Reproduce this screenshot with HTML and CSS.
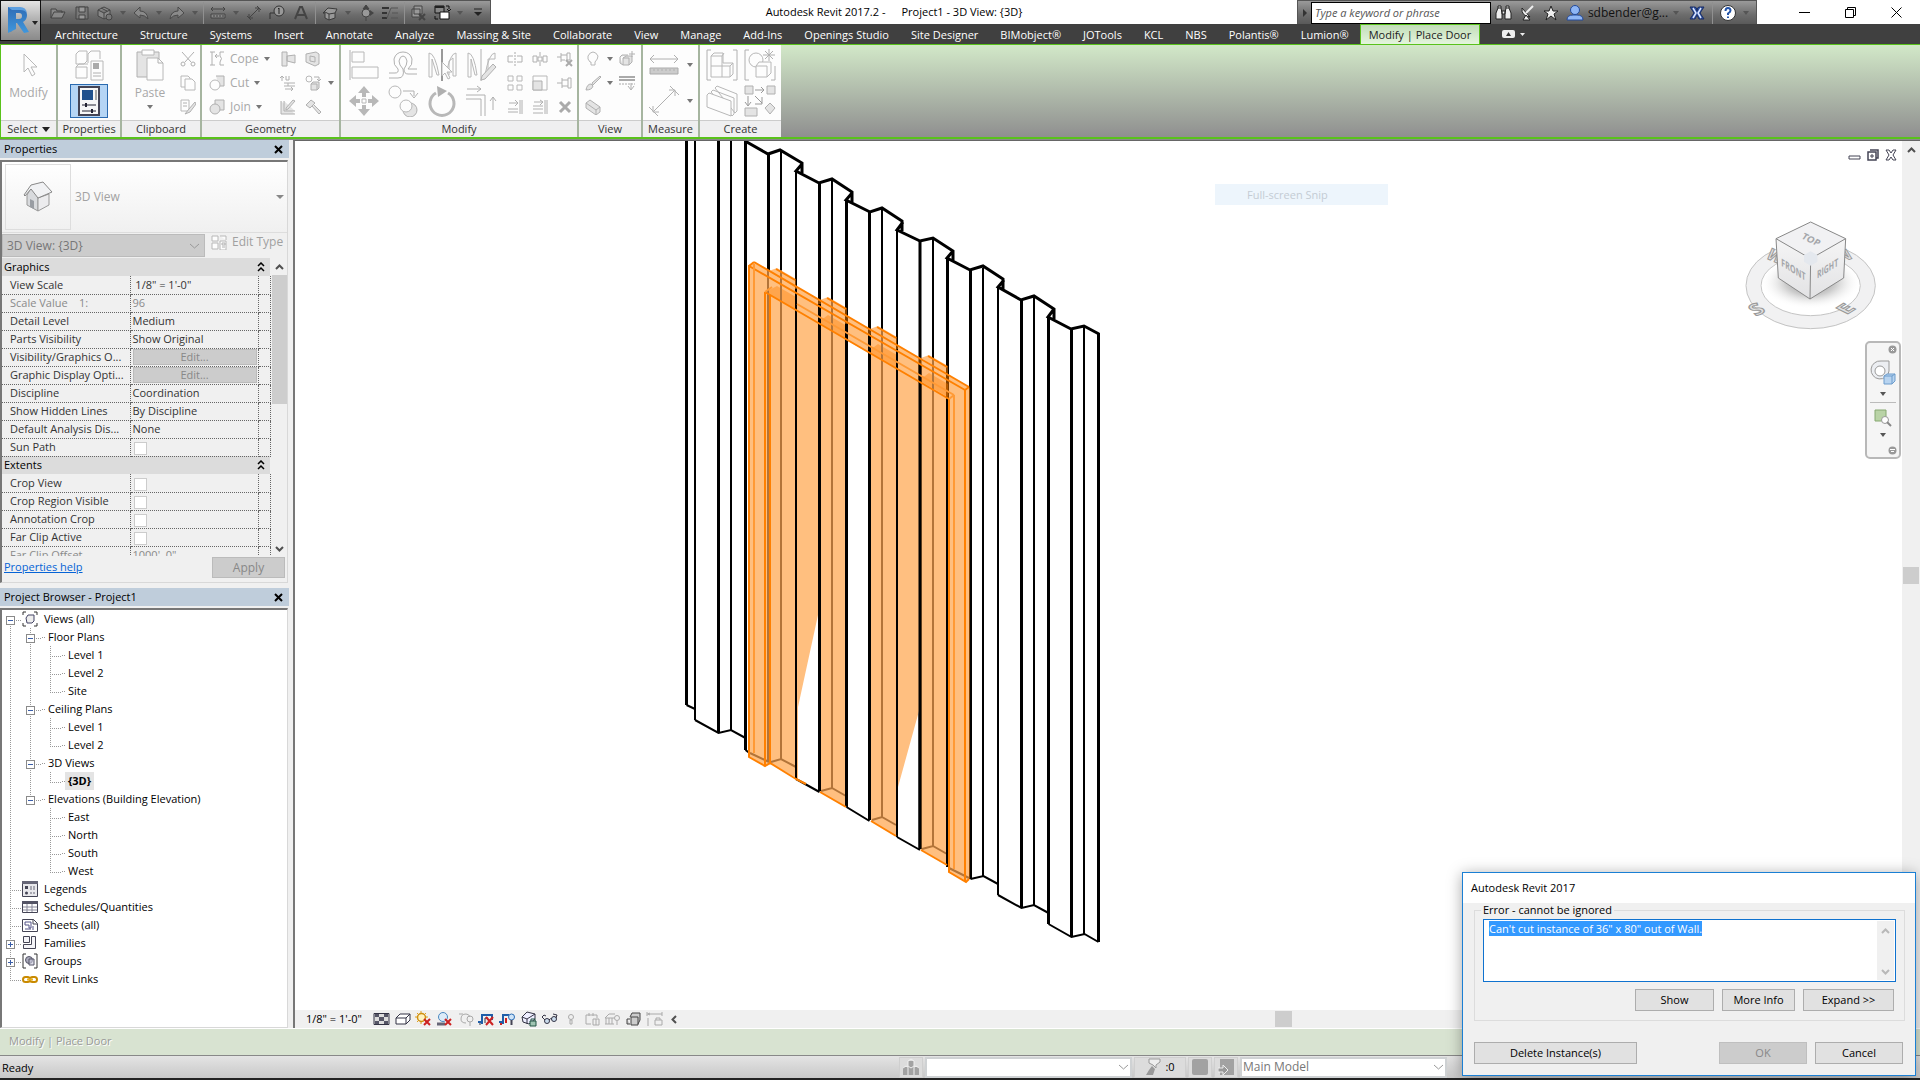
FILE: index.html
```html
<!DOCTYPE html>
<html lang="en">
<head>
<meta charset="utf-8">
<title>Autodesk Revit 2017.2 - Project1 - 3D View: {3D}</title>
<link rel="stylesheet" href="styles.css">
</head>
<body>
<header class="head">
  <button class="app" aria-label="Application menu">
    <svg width="39" height="38" viewBox="0 0 39 38"><defs><linearGradient id="rb" x1="0" y1="0" x2="0" y2="1"><stop offset="0" stop-color="#2f6cb5"/><stop offset="1" stop-color="#3f97dd"/></linearGradient></defs><path d="M7 5l4 2v22l-4 1z" fill="#1d4c86"/><path d="M11 7h8q7 0 7 6 0 5-4 7l6 10-5 1-7-10h-1v6l-8 4V5zM15 11v6h3q3 0 3-3t-3-3z" fill="url(#rb)"/><path d="M7 5h12q6 0 7 6-2-3-7-3h-8z" fill="#5c9fe0"/><path d="M31 19h6l-3 4z" fill="#222"/></svg>
  </button>
  <div class="titlebar">
    <div class="qat">
      <button class="q" aria-label="Open"><svg width="16" height="16" viewBox="0 0 16 16"><path d="M1 13V4h5l1 2h5v2M1 13l3-6h11l-3 6z" fill="#888" stroke="#444"/></svg></button>
      <button class="q" aria-label="Save"><svg width="16" height="16" viewBox="0 0 16 16"><path d="M2 2h12v12H2z" fill="#777" stroke="#444"/><path d="M5 2h6v5H5zM5 10h6v4H5z" fill="#999" stroke="#444"/></svg></button>
      <button class="q" aria-label="Synchronize"><svg width="16" height="16" viewBox="0 0 16 16"><path d="M1 5l6-3 6 3v6l-6 3-6-3zM1 5l6 3 6-3M7 8v6M4 3l6 3" fill="#888" stroke="#444"/><circle cx="12" cy="12" r="3" fill="#777" stroke="#444"/></svg></button>
      <i class="dd"></i>
      <button class="q" aria-label="Undo"><svg width="16" height="16" viewBox="0 0 16 16"><path d="M7 2v4q7 0 8 8-3-4-8-4v3L1 8z" fill="#8a8a8a" stroke="#4a4a4a"/></svg></button>
      <i class="dd"></i>
      <button class="q" aria-label="Redo"><svg width="16" height="16" viewBox="0 0 16 16"><path d="M9 2v4q-7 0-8 8 3-4 8-4v3l6-5z" fill="#8a8a8a" stroke="#4a4a4a"/></svg></button>
      <i class="dd"></i><i class="sep"></i>
      <button class="q" aria-label="Measure"><svg width="16" height="16" viewBox="0 0 16 16"><path d="M1 4h14M3 2L1 4l2 2M13 2l2 2-2 2" fill="none" stroke="#444"/><path d="M1 9h14v4H1z" fill="#888" stroke="#444"/><path d="M4 10v2M7 10v2M10 10v2M13 10v2" stroke="#444"/></svg></button>
      <i class="dd"></i>
      <button class="q" aria-label="Aligned dimension"><svg width="16" height="16" viewBox="0 0 16 16"><path d="M3 13L13 3M3 9v4h4M9 3h4v4M1 11l4 4M11 1l4 4" fill="none" stroke="#444"/></svg></button>
      <button class="q" aria-label="Tag by category"><svg width="16" height="16" viewBox="0 0 16 16"><path d="M1 14V8h4" fill="none" stroke="#333"/><circle cx="10" cy="6" r="5" fill="#999" stroke="#333"/><path d="M10 3v6M9 4l1-1" stroke="#222"/></svg></button>
      <button class="q" aria-label="Text"><svg width="16" height="16" viewBox="0 0 16 16"><path d="M2 14L7 2h2l5 12M4 10h8" fill="none" stroke="#444" stroke-width="2"/></svg></button>
      <i class="sep"></i>
      <button class="q" aria-label="Default 3D view"><svg width="16" height="16" viewBox="0 0 16 16"><path d="M1 8l5-5 9 1-2 4v5l-6 2-4-2V8zM7 15V9l6-1M1 8l2-1 4 2" fill="#999" stroke="#3b3b3b"/></svg></button>
      <i class="dd"></i>
      <button class="q" aria-label="Section"><svg width="16" height="16" viewBox="0 0 16 16"><path d="M8 0l3 4H5zM8 16V4" fill="#444" stroke="#444"/><circle cx="8" cy="8" r="4" fill="#999" stroke="#444"/><path d="M12 5l4 3-4 3z" fill="#444"/></svg></button>
      <button class="q" aria-label="Thin lines"><svg width="18" height="16" viewBox="0 0 18 16"><path d="M1 3h7M1 8h5M1 13h5" stroke="#333" stroke-width="2"/><path d="M10 3h7M11 8h6M10 13h7M10 3L6 13" stroke="#555"/></svg></button>
      <i class="sep"></i>
      <button class="q" aria-label="Close hidden windows"><svg width="16" height="16" viewBox="0 0 16 16"><path d="M4 1h8v8H4zM2 4h8v8H2z" fill="#999" stroke="#444"/><path d="M9 9l6 6M15 9l-6 6" stroke="#444" stroke-width="2"/></svg></button>
      <button class="q" aria-label="Switch windows"><svg width="18" height="18" viewBox="0 0 18 18"><path d="M2 2h9v7H2z" fill="#888" stroke="#111"/><path d="M2 2h9v2H2zM7 8h9v2H7z" fill="#222"/><path d="M7 8h9v7H7z" fill="#fff" stroke="#111"/><path d="M13 2h3v3M14 5l2 2 2-2M2 12v3h3" fill="none" stroke="#111"/></svg></button>
      <i class="dd"></i>
      <button class="q" aria-label="Customize"><svg width="10" height="10" viewBox="0 0 10 10"><path d="M1 1h8" stroke="#222"/><path d="M1 4h8L5 8z" fill="#222"/></svg></button>
    </div>
    <h1 class="title"><span>Autodesk Revit 2017.2 -</span><span>Project1 - 3D View: {3D}</span></h1>
    <div class="info">
      <button class="tog" aria-label="Collapse search"><svg width="6" height="10" viewBox="0 0 6 10"><path d="M1 1l4 4-4 4z" fill="#333"/></svg></button>
      <input class="search" type="text" aria-label="Search" placeholder="Type a keyword or phrase">
      <button class="q" aria-label="Find"><svg width="17" height="16" viewBox="0 0 17 16"><path d="M1 8l2-5h3l1 5v6H1zM10 8l1-5h3l2 5v6h-6zM7 6h3v3H7zM3 3V1h3v2M11 3V1h3v2" fill="#eee" stroke="#222"/></svg></button>
      <button class="q" aria-label="Communication center"><svg width="16" height="16" viewBox="0 0 16 16"><path d="M3 3q-1 8 8 9z" fill="#eee" stroke="#222"/><path d="M7 8l7-7" stroke="#eee" stroke-width="2"/><path d="M4 15l3-5 4 5z" stroke="#222" fill="#eee"/></svg></button>
      <button class="q" aria-label="Favorites"><svg width="16" height="16" viewBox="0 0 16 16"><path d="M8 1l2 5h5l-4 3 2 6-5-4-5 4 2-6-4-3h5z" fill="#eee" stroke="#222"/></svg></button>
      <button class="q" aria-label="Account"><svg width="18" height="18" viewBox="0 0 18 18"><circle cx="9" cy="6" r="4.500" fill="#8fb6f5" stroke="#234a9c"/><path d="M1 16q0-5 6-5h4q6 0 6 5z" fill="#8fb6f5" stroke="#234a9c"/></svg></button>
      <button class="user">sdbender@g...</button><i class="dd"></i>
      <button class="q xch" aria-label="Exchange apps"><svg width="16" height="16" viewBox="0 0 16 16"><path d="M1 2h5q2 0 2 4 0-4 2-4h5l-4 6 4 6h-5l-2-4-2 4H1l4-6z" fill="#2c4f9e" stroke="#1c2f66"/><path d="M4 3l3 5-3 5M12 3L9 8l3 5" fill="none" stroke="#dbe6ff" stroke-width="1.500"/></svg></button>
      <i class="sep"></i>
      <button class="q" aria-label="Help"><svg width="18" height="18" viewBox="0 0 18 18"><circle cx="9" cy="9" r="7.500" fill="#fff" stroke="#333"/><path d="M6.500 7q0-3 2.500-3t2.500 2.500q0 1.500-2.500 3V11M9 12.500V14" fill="none" stroke="#2454a8" stroke-width="2"/></svg></button>
      <i class="dd"></i>
    </div>
    <div class="win">
      <button aria-label="Minimize"><svg width="11" height="11" viewBox="0 0 11 11"><path d="M0 5.500h11" stroke="#000"/></svg></button>
      <button aria-label="Restore"><svg width="11" height="11" viewBox="0 0 11 11"><path d="M.5 2.500h8v8h-8zM2.500 2.500v-2h8v8h-2" fill="none" stroke="#000"/></svg></button>
      <button aria-label="Close"><svg width="11" height="11" viewBox="0 0 11 11"><path d="M.5.5l10 10M10.500.5l-10 10" stroke="#000"/></svg></button>
    </div>
  </div>
  <nav class="tabs">
    <a href="#">Architecture</a><a href="#">Structure</a><a href="#">Systems</a><a href="#">Insert</a><a href="#">Annotate</a><a href="#">Analyze</a><a href="#">Massing &amp; Site</a><a href="#">Collaborate</a><a href="#">View</a><a href="#">Manage</a><a href="#">Add-Ins</a><a href="#">Openings Studio</a><a href="#">Site Designer</a><a href="#">BIMobject®</a><a href="#">JOTools</a><a href="#">KCL</a><a href="#">NBS</a><a href="#">Polantis®</a><a href="#">Lumion®</a><a href="#" class="on">Modify | Place Door</a>
    <button class="mini" aria-label="Minimize ribbon"><svg width="24" height="8" viewBox="0 0 24 8"><rect width="13" height="8" rx="2" fill="#eee"/><path d="M4 6l2.500-4L9 6z" fill="#333"/><path d="M18 3h5l-2.500 3z" fill="#eee"/></svg></button>
  </nav>
</header>

<section class="ribbon">
  <div class="panel p-select"><div class="tools one">
    <button class="big"><svg width="32" height="32" viewBox="0 0 32 32"><path d="M11 5v18l4-4 4 8 3-2-4-7h6z" class="w"/></svg>Modify</button></div><button class="plabel">Select <i class="dd dk"></i></button></div>
  <div class="panel p-prop"><div class="tools two">
    <button aria-label="Type properties"><svg width="32" height="32" viewBox="0 0 32 32"><path d="M3 5l3-3h8v10l-3 3H3zM15 5l3-3h9v8M15 5v9M3 18h11v11H3zM3 18l3-3h9" class="w"/><path d="M18 12h12v19H18z" class="w"/><path d="M20 14h6v6h-6z" fill="#aaa"/><path d="M20 24h8M20 27h8" class="l"/></svg></button>
    <button class="sel" aria-label="Properties"><svg width="32" height="32" viewBox="0 0 32 32"><path d="M6 2h20v28H6z" fill="#f7f7f7" stroke="#445" stroke-width="2"/><path d="M9 5h11v10H9z" fill="#20508c"/><path d="M22 5h2v10h-2z" fill="#aaa"/><path d="M9 20h14M9 26h14" stroke="#223"/><path d="M13 18v4M19 24v4" stroke="#223" stroke-width="2"/></svg></button></div><span class="plabel">Properties</span></div>
  <div class="panel p-clip"><div class="tools pair">
    <button class="big"><svg width="32" height="32" viewBox="0 0 32 32"><path d="M3 3h22v25H3z" class="s"/><path d="M8 1h12v5H8z" class="w"/><path d="M13 9h11l5 5v17H13z" class="w"/><path d="M24 9v5h5" class="l"/></svg>Paste<i class="dd"></i></button>
    <div class="col">
      <button aria-label="Cut"><svg width="16" height="16" viewBox="0 0 16 16"><path d="M2 1l9 10M14 1L5 11" class="l"/><circle cx="3" cy="13" r="2" class="l"/><circle cx="13" cy="13" r="2" class="l"/></svg></button>
      <button aria-label="Copy"><svg width="16" height="16" viewBox="0 0 16 16"><path d="M1 1h7l2 2v9H1z" class="w"/><path d="M5 4h7l3 3v8H5z" class="w"/></svg></button>
      <button aria-label="Match type"><svg width="16" height="16" viewBox="0 0 16 16"><path d="M1 1h8v11H1z" class="w"/><path d="M3 4h4M3 7h4M15 3l-6 7-4 5 5-2 6-8z" class="s"/></svg></button></div></div><span class="plabel">Clipboard</span></div>
  <div class="panel p-geo"><div class="tools geo">
    <div class="col txt">
      <button><svg width="16" height="16" viewBox="0 0 16 16"><path d="M1 1h5M3 1v13M1 14h5M10 5H6l2-2M6 5l2 2M15 1h-4v4q3 2 0 6v3h4" class="l"/></svg>Cope <i class="dd"></i></button>
      <button><svg width="16" height="16" viewBox="0 0 16 16"><path d="M7 1h8v10h-5" class="s"/><circle cx="6" cy="10" r="5" class="w"/></svg>Cut <i class="dd"></i></button>
      <button><svg width="16" height="16" viewBox="0 0 16 16"><path d="M6 1h9v10H6z" class="s"/><circle cx="6" cy="10" r="5" class="s"/></svg>Join <i class="dd"></i></button></div>
    <div class="col">
      <button aria-label="Wall joins"><svg width="16" height="16" viewBox="0 0 16 16"><path d="M2 1h5v14H2zM7 5l8-1v8l-8-2z" class="s"/></svg></button>
      <button aria-label="Beam joins"><svg width="16" height="16" viewBox="0 0 16 16"><path d="M2 6V1M0 3l2-2 2 2M6 1v4h3V1M4 8h11M4 11h11M8 8v3M5 14h8M11 12l2 2-2 2" class="l"/></svg></button>
      <button aria-label="Demolish lines"><svg width="16" height="16" viewBox="0 0 16 16"><path d="M1 2v13h14M4 2v10h11M13 1l-7 8v2l2-1 7-8z" class="s"/></svg></button></div>
    <div class="col">
      <button aria-label="Split face"><svg width="16" height="16" viewBox="0 0 16 16"><path d="M1 3l10-2 3 2v10l-4 2-9-4zM5 5l5 1v5l-5-1z" class="s"/></svg></button>
      <button aria-label="Paint"><svg width="16" height="16" viewBox="0 0 16 16"><circle cx="4" cy="4" r="3" class="w"/><path d="M9 2h5v4M12 4l2 2 2-2" class="l"/><path d="M6 9l2-2h6v6l-2 2H6zM6 9h6v6" class="s"/></svg></button>
      <button aria-label="Demolish"><svg width="16" height="16" viewBox="0 0 16 16"><path d="M1 6l5-5 4 3-5 5zM7 7l7 8 2-2-7-7" class="s"/></svg></button></div>
    <i class="dd"></i></div><span class="plabel">Geometry</span></div>
  <div class="panel p-mod"><div class="tools mod">
    <div class="grid4">
      <button aria-label="Align"><svg width="32" height="32" viewBox="0 0 32 32"><path d="M2 1v30" class="l"/><path d="M4 3h12v10H4zM4 18h26v11H4z" class="w"/></svg></button>
      <button aria-label="Offset"><svg width="32" height="32" viewBox="0 0 32 32"><path d="M2 24h6q4 0 3-4-5-4-4-10 2-7 9-7t9 7q1 6-4 10h9" class="l"/><path d="M2 29h9q7 0 5-9-4-4-4-8 1-5 4-5t4 5q0 4-3 8 0 5 4 5h9" class="l"/></svg></button>
      <button aria-label="Mirror pick axis"><svg width="32" height="32" viewBox="0 0 32 32"><path d="M3 4q6 0 10 22h-2L6 10v18H3zM30 4q-6 0-10 22h3V12l4-3v18h3z" class="w"/><path d="M16 0v32" stroke="#999" stroke-width="2"/><path d="M16 13v14l3-3 3 6 2-1-3-6h5z" class="w"/></svg></button>
      <button aria-label="Mirror draw axis"><svg width="32" height="32" viewBox="0 0 32 32"><path d="M3 4q6 0 9 22h-2L6 10v18H3zM30 4q-6 0-10 22h3V10h7z" class="w"/><path d="M16 0v32" class="l"/><path d="M28 15l3 3-11 12-4 1 1-4z" class="s"/></svg></button>
      <button aria-label="Move"><svg width="32" height="32" viewBox="0 0 32 32"><path d="M16 1l6 7h-4v4h-4V8h-4zM16 31l6-7h-4v-4h-4v4h-4zM1 16l7-6v4h4v4H8v4zM31 16l-7-6v4h-4v4h4v4z" fill="#b8b8b8"/><path d="M14 14h4v4h-4z" class="w"/></svg></button>
      <button aria-label="Copy elements"><svg width="32" height="32" viewBox="0 0 32 32"><circle cx="8" cy="7" r="6" class="w"/><path d="M16 6h11v5M23 8l4 5 4-5" class="l"/><circle cx="23" cy="25" r="7" class="s"/><circle cx="19" cy="21" r="6" class="w"/></svg></button>
      <button aria-label="Rotate"><svg width="32" height="32" viewBox="0 0 32 32"><path d="M10 8a12 12 0 1 0 12 0" fill="none" stroke="#b8b8b8" stroke-width="3"/><path d="M11 1l10 5-9 6z" fill="#b0b0b0"/></svg></button>
      <button aria-label="Trim corner"><svg width="32" height="32" viewBox="0 0 32 32"><path d="M1 10h19v21M1 14h15v17" class="l"/><path d="M2 4h14M12 1l4 3-4 3M28 25V12M25 16l3-4 3 4" class="l"/></svg></button>
    </div>
    <div class="grid3">
      <button aria-label="Split"><svg width="16" height="16" viewBox="0 0 16 16"><path d="M6 5H1v6h5M10 5h5v6h-5" class="l"/><path d="M8 1v14" stroke="#aaa" stroke-dasharray="2 1"/></svg></button>
      <button aria-label="Split with gap"><svg width="16" height="16" viewBox="0 0 16 16"><path d="M1 5h4v6H1zM11 5h4v6h-4z" class="l"/><path d="M8 1v4M6 6h4v4H6zM8 11v4" class="l"/></svg></button>
      <button aria-label="Unpin"><svg width="16" height="16" viewBox="0 0 16 16"><path d="M0 6h4M4 2v9M4 4h6M4 9h4M10 2v7h3V2z" class="l"/><path d="M9 9l6 6M15 9l-6 6" stroke="#aaa" stroke-width="2"/></svg></button>
      <button aria-label="Array"><svg width="16" height="16" viewBox="0 0 16 16"><path d="M1 1h5v5H1zM10 1h5v5h-5zM1 10h5v5H1zM10 10h5v5h-5z" class="w"/></svg></button>
      <button aria-label="Scale"><svg width="16" height="16" viewBox="0 0 16 16"><path d="M1 1h14v14H1z" class="w"/><path d="M1 6h9v9H1z" class="s"/></svg></button>
      <button aria-label="Pin"><svg width="16" height="16" viewBox="0 0 16 16"><path d="M0 8h5M5 3v10M5 5h6M5 11h6M11 3h3v10h-3z" class="l"/></svg></button>
      <button aria-label="Trim single"><svg width="16" height="16" viewBox="0 0 16 16"><path d="M13 1v14M15 1v14M2 4h8M8 1l3 3-3 3M1 10h10M1 13h10" class="l"/></svg></button>
      <button aria-label="Trim multiple"><svg width="16" height="16" viewBox="0 0 16 16"><path d="M13 1v14M15 1v14M2 3h8M8 1l3 2-3 3M1 7h10M1 10h10M1 14h10" class="l"/></svg></button>
      <button aria-label="Delete"><svg width="16" height="16" viewBox="0 0 16 16"><path d="M3 3l10 10M13 3L3 13" stroke="#aaa" stroke-width="3"/></svg></button>
    </div></div><span class="plabel">Modify</span></div>
  <div class="panel p-view"><div class="tools vw">
    <button class="w28" aria-label="Hide in view"><svg width="16" height="16" viewBox="0 0 16 16"><path d="M5 11q-3-3-2-6 2-4 5-4t5 4q0 3-3 6v3H6v-3z" class="w"/></svg><i class="dd"></i></button>
    <button aria-label="Displace"><svg width="16" height="16" viewBox="0 0 16 16"><path d="M1 6l2-2h6M1 6v6l3 2M4 7h6v7H4zM4 7l3-2h6v6l-3 3M13 0v6M10 3h6" class="s"/></svg></button>
    <button class="w28" aria-label="Override graphics"><svg width="16" height="16" viewBox="0 0 16 16"><path d="M15 1L7 8l1 2 8-8zM6 9q-4 0-5 6 6 0 7-4z" class="s"/></svg><i class="dd"></i></button>
    <button aria-label="Linework"><svg width="16" height="16" viewBox="0 0 16 16"><path d="M0 2h16M0 5h16" stroke="#aaa" stroke-width="2"/><path d="M0 9h16" stroke="#aaa" stroke-dasharray="2 1"/><path d="M12 8v6M9 11l3 4 3-4" class="l"/></svg></button>
    <button class="w28" aria-label="Selection box"><svg width="16" height="16" viewBox="0 0 16 16"><path d="M1 4l4-3 10 7v5l-4 3L1 9zM1 4l10 7v5M11 11l4-3" class="s"/></svg></button></div><span class="plabel">View</span></div>
  <div class="panel p-meas"><div class="tools ms">
    <button aria-label="Measure between"><svg width="32" height="32" viewBox="0 0 32 32"><path d="M2 10h28M6 6l-4 4 4 4M26 6l4 4-4 4" class="l"/><path d="M2 19h28v6H2z" fill="#ccc" stroke="#aaa"/><path d="M6 20v2M10 20v2M14 20v2M18 20v2M22 20v2M26 20v2" class="l"/></svg><i class="dd"></i></button>
    <button aria-label="Aligned"><svg width="32" height="32" viewBox="0 0 32 32"><path d="M5 27L27 5M5 21v6h6M21 5h6v6M1 22l9 9M22 1l9 9" class="l"/></svg><i class="dd"></i></button></div><span class="plabel">Measure</span></div>
  <div class="panel p-create"><div class="tools cr">
    <button aria-label="Create assembly"><svg width="32" height="32" viewBox="0 0 32 32"><path d="M5 1H1v30h4M27 1h4v30h-4" class="l"/><path d="M5 7l3-3h9v10h10v11l-3 3H5zM5 17h11V7H5M16 17h8v11M16 17v11M24 17l3-3M16 7l2-3" class="w"/></svg></button>
    <button aria-label="Create group"><svg width="32" height="32" viewBox="0 0 32 32"><path d="M5 1H1v30h4M27 31h4V17" class="l"/><circle cx="12" cy="11" r="7" class="w"/><path d="M12 17l3-4h12v11l-4 4H12zM12 17h11v11" class="w"/><path d="M25 0v12M19 6h12M21 2l8 8M29 2l-8 8" class="l"/></svg></button>
    <button aria-label="Create parts"><svg width="32" height="32" viewBox="0 0 32 32"><path d="M9 3l2-2 20 8v17l-2 2zM5 7l2-2 21 8v16l-2 2z" class="w"/><path d="M1 10l2-2 22 8v15L1 22z" class="w"/></svg></button>
    <button aria-label="Create similar"><svg width="32" height="32" viewBox="0 0 32 32"><path d="M1 1h8v8H1zM23 1h8v8h-8zM1 23h12v8H1zM26 18l5 5-5 6-5-6z" class="s"/><path d="M11 5h9M17 2l3 3-3 3M4 11v9M1 17l3 4 3-4M11 11l7 7M18 12v7h-7" stroke="#999" fill="none"/></svg></button></div><span class="plabel">Create</span></div>
</section>

<main class="work">
  <aside class="side">
    <section class="pal props">
      <h2>Properties <button class="x" aria-label="Close properties"><svg width="9" height="9" viewBox="0 0 9 9"><path d="M1 1l7 7M8 1L1 8" stroke="#000" stroke-width="2"/></svg></button></h2>
      <div class="pbody">
        <button class="type"><span class="thumb"><svg width="32" height="32" viewBox="0 0 32 32"><path d="M5 14v10l11 6V16L9 7z" fill="#d8dadd" stroke="#999"/><path d="M16 17l11-4v11l-11 6z" fill="#ececee" stroke="#999"/><path d="M2 14L9 4l12-3 9 10-14 6L9 8 3 15z" fill="#f1f2f4" stroke="#888"/><path d="M8 18l4 2v8l-4-2z" fill="#999da3"/></svg></span><span>3D View</span><i class="dd"></i></button>
        <div class="inst"><select aria-label="Instance" disabled><option>3D View: {3D}</option></select>
          <button class="etype"><svg width="16" height="16" viewBox="0 0 16 16"><path d="M1 2h6v5H1zM9 2h6v4M1 9h6v6H1z" class="w"/><path d="M9 7h6v9H9z" class="w"/><path d="M11 9h3v2h-3zM11 13h3" class="l"/></svg>Edit Type</button></div>
        <div class="scroller">
          <div class="tblwrap"><table>
            <colgroup><col class="k1"><col class="k2"><col class="k3"></colgroup>
            <tr class="grp"><th colspan="3">Graphics<svg width="8" height="10" viewBox="0 0 8 10"><path d="M1 4l3-3 3 3M1 9l3-3 3 3" fill="none" stroke="#000" stroke-width="1.500"/></svg></th></tr>
            <tr><th>View Scale</th><td>&nbsp;1/8" = 1'-0"</td><td></td></tr>
            <tr class="dim"><th>Scale Value &nbsp;&nbsp; 1:</th><td>96</td><td></td></tr>
            <tr><th>Detail Level</th><td>Medium</td><td></td></tr>
            <tr><th>Parts Visibility</th><td>Show Original</td><td></td></tr>
            <tr><th>Visibility/Graphics O...</th><td><button class="edit" disabled>Edit...</button></td><td></td></tr>
            <tr><th>Graphic Display Opti...</th><td><button class="edit" disabled>Edit...</button></td><td></td></tr>
            <tr><th>Discipline</th><td>Coordination</td><td></td></tr>
            <tr><th>Show Hidden Lines</th><td>By Discipline</td><td></td></tr>
            <tr><th>Default Analysis Dis...</th><td>None</td><td></td></tr>
            <tr><th><label for="c1">Sun Path</label></th><td><input type="checkbox" id="c1"></td><td></td></tr>
            <tr class="grp"><th colspan="3">Extents<svg width="8" height="10" viewBox="0 0 8 10"><path d="M1 4l3-3 3 3M1 9l3-3 3 3" fill="none" stroke="#000" stroke-width="1.500"/></svg></th></tr>
            <tr><th><label for="c2">Crop View</label></th><td><input type="checkbox" id="c2"></td><td></td></tr>
            <tr><th><label for="c3">Crop Region Visible</label></th><td><input type="checkbox" id="c3"></td><td></td></tr>
            <tr><th><label for="c4">Annotation Crop</label></th><td><input type="checkbox" id="c4"></td><td></td></tr>
            <tr><th><label for="c5">Far Clip Active</label></th><td><input type="checkbox" id="c5"></td><td></td></tr>
            <tr class="dim"><th>Far Clip Offset</th><td>1000'&nbsp; 0"</td><td></td></tr>
          </table></div>
          <div class="vbar"><svg width="9" height="6" viewBox="0 0 9 6"><path d="M1 5l3.500-3.500L8 5" class="ch"/></svg><i class="thumbv"></i><svg width="9" height="6" viewBox="0 0 9 6"><path d="M1 1l3.500 3.500L8 1" class="ch"/></svg></div>
        </div>
        <div class="pfoot"><a href="#">Properties help</a><button disabled>Apply</button></div>
      </div>
    </section>
    <section class="pal browser">
      <h2>Project Browser - Project1 <button class="x" aria-label="Close browser"><svg width="9" height="9" viewBox="0 0 9 9"><path d="M1 1l7 7M8 1L1 8" stroke="#000" stroke-width="2"/></svg></button></h2>
      <ul class="tree">
        <li><i class="g m first"></i><svg width="16" height="16" viewBox="0 0 16 16"><path d="M4 1H1v3M12 1h3v3M4 15H1v-3M12 15h3v-3" fill="none" stroke="#333"/><path d="M4 7l2-3h6v6l-2 2H5z" fill="#eee" stroke="#446"/></svg><span>Views (all)</span></li>
        <li><i class="g v"></i><i class="g m"></i><span class="s2">Floor Plans</span></li>
        <li><i class="g v"></i><i class="g v"></i><i class="g t"></i><span class="s3">Level 1</span></li>
        <li><i class="g v"></i><i class="g v"></i><i class="g t"></i><span class="s3">Level 2</span></li>
        <li><i class="g v"></i><i class="g v"></i><i class="g e"></i><span class="s3">Site</span></li>
        <li><i class="g v"></i><i class="g m"></i><span class="s2">Ceiling Plans</span></li>
        <li><i class="g v"></i><i class="g v"></i><i class="g t"></i><span class="s3">Level 1</span></li>
        <li><i class="g v"></i><i class="g v"></i><i class="g e"></i><span class="s3">Level 2</span></li>
        <li><i class="g v"></i><i class="g m"></i><span class="s2">3D Views</span></li>
        <li><i class="g v"></i><i class="g v"></i><i class="g e"></i><span class="s3 cur">{3D}</span></li>
        <li><i class="g v"></i><i class="g m end"></i><span class="s2">Elevations (Building Elevation)</span></li>
        <li><i class="g v"></i><i class="g"></i><i class="g t"></i><span class="s3">East</span></li>
        <li><i class="g v"></i><i class="g"></i><i class="g t"></i><span class="s3">North</span></li>
        <li><i class="g v"></i><i class="g"></i><i class="g t"></i><span class="s3">South</span></li>
        <li><i class="g v"></i><i class="g"></i><i class="g e"></i><span class="s3">West</span></li>
        <li><i class="g t"></i><svg width="16" height="16" viewBox="0 0 16 16"><path d="M.5.5h15v15H.5z" fill="#e8e8ec" stroke="#445"/><path d="M0 0h16v3H0z" fill="#667"/><path d="M3 5h3v3H3z" fill="#445"/><circle cx="4.500" cy="12" r="1.500" fill="#445"/><path d="M8 6h5M8 8h5M8 12h5" stroke="#667" stroke-dasharray="2 1"/></svg><span>Legends</span></li>
        <li><i class="g t"></i><svg width="16" height="16" viewBox="0 0 16 16"><path d="M.5 2.500h15v11H.5z" fill="#fff" stroke="#445"/><path d="M0 2h16v3H0z" fill="#556"/><path d="M1 8h14M1 11h14M5 5v8M10 5v8" stroke="#889"/></svg><span>Schedules/Quantities</span></li>
        <li><i class="g t"></i><svg width="16" height="16" viewBox="0 0 16 16"><path d="M.5 2.500h11l4 4v8H.5z" fill="#fff" stroke="#445"/><path d="M11 2v5h4" fill="none" stroke="#445"/><path d="M3 5h6v6H7V8H3zM3 12h6M11 9v4" fill="none" stroke="#558"/></svg><span>Sheets (all)</span></li>
        <li><i class="g p"></i><svg width="16" height="16" viewBox="0 0 16 16"><path d="M1.500 1.500h6v6h-6zM9.500 1.500h4v12h-12v-4h8z" fill="#f4f4f8" stroke="#445"/></svg><span>Families</span></li>
        <li><i class="g p"></i><svg width="16" height="16" viewBox="0 0 16 16"><path d="M4 1H1v14h3M12 1h3v14h-3" fill="none" stroke="#333"/><circle cx="7" cy="7" r="3.500" fill="#aab" stroke="#556"/><path d="M7 6h5v6H7z" fill="#ccd" stroke="#556" fill-opacity=".6"/></svg><span>Groups</span></li>
        <li><i class="g e"></i><svg width="16" height="16" viewBox="0 0 16 16"><rect x="1" y="6" width="7" height="5" rx="2.500" fill="none" stroke="#c98a00" stroke-width="2"/><rect x="8" y="6" width="7" height="5" rx="2.500" fill="none" stroke="#c98a00" stroke-width="2"/><path d="M5 8.500h6" stroke="#e8b020" stroke-width="2"/></svg><span>Revit Links</span></li>
      </ul>
    </section>
  </aside>

  <section class="viewport">
    <div class="canvas">
      <svg class="model" width="450" height="820" viewBox="670 142 450 820">
        <g fill="none" stroke="#000" stroke-width="2">
          <path stroke-width="3" d="M686.500 142V706M718.500 142V734M745.500 142V751M768.500 154V272M819.500 184V792M846.500 201V808M869.500 213V821M920 242V850M947.500 259V868M970.500 271V880M1021.500 301V909M1048.500 317V925M1071.500 330V938M1098.500 334V943"/>
          <path d="M695 142V721M731 142V731M781 151V271M796 172V780M832 181V301M882 210V330M897 230V838M933 240V359M983 269V877M998 288V896M1034 298V906M1084 327V935"/>
          <path stroke-width="3" d="M745 142l23 13 12-4 22 13v10M802 165l-6 7 23 12 13-4 20 13v10M852 194l-6 7 24 12 12-4 20 13v10M903 223l-6 8 23 11 13-3 20 13v10M953 252l-6 7 23 12 13-4 20 13v10M1004 281l-6 7 23 13 13-4 20 13v10M1054 310l-6 8 23 12 13-3 15 8"/>
          <path d="M686.500 706l8.500 4M695 721l23.500 13 12.500-3 14.500 8M745.500 751l4 3M796 780l23.500 13M846.500 808l23 14M897 838l23 13M970.500 880l13-3 14.500 8M998 896l23.500 13 12.500-3 14.500 8M1048.500 925l23 13 13-3 14 8"/>
        </g>
        <g fill="#ff8000" fill-opacity=".5">
          <path d="M749 266l5-3 216 126v491l-4 3-18-10V400L871 355v467l26 15v-49l21-76V383h2v467l28 16V400l-77-45-25-14v467l-26-15V326h-2v290l-20 92v72l-26-15-6 2-16-9z"/>
          <path d="M769 272l8-3 19 11v9zM820 301l8-3 19 11v9zM870 330l8-3 19 11v9zM921 359l8-3 19 11v9z"/>
          <path d="M765 293l12-6 19 11v13l-28-16zM820 322l8-6 19 11v13l-28-16zM870 351l8-6 19 11v13l-28-16zM921 380l8-6 19 11v13l-28-16z" fill-opacity=".4"/>
        </g>
        <g fill="#ffbf80"><path d="M871 356l26 15v467l-26-16zM898 372l21 12v328l-21 76z"/></g>
        <g fill="none" stroke="#b27439" stroke-width="2">
          <path d="M768 272V762M781 271V760M832 301V789M882 330V818M933 359V847M771 763l10-3 15 8M821 792l11-3 14 8M872 821l10-3 14 8M922 850l11-3 14 8M750 754l19 9M949 869l20 10"/>
        </g>
        <g fill="none" stroke="#000" stroke-width="2"><path d="M796 290V780M897 350V838" /><path d="M819.500 305V792M846.500 325V808M869.500 335V821M920 365V850M947.500 400V868" stroke-width="3"/></g>
        <g fill="none" stroke="#ff8000" stroke-width="2">
          <path d="M749 266V758l16 9 5-3 26 16M754 263L969 388M749 267L965 391M749 267l5-4M765 293L949 400M765 293V766M770 296V764M796 780l10 5M820 793l26 15M871 822l25 15M921 851l26 15M949 400V873l17 10 3-3M965 391V882M965 391l4-3M776 270l19 11M827 299l19 11M877 328l19 11M928 357l19 11"/>
          <path d="M765 293l7-5M754 265V754M954 396V870M797 305L954 396M949 400l5-4" stroke="#ff9a35"/>
        </g>
      </svg>
      <div class="snip">Full-screen Snip</div>
      <div class="mdi">
        <button aria-label="Minimize view"><svg width="13" height="12" viewBox="0 0 13 12"><path d="M1 7h11v3H1z" fill="#fff" stroke="#445"/></svg></button>
        <button aria-label="Restore view"><svg width="12" height="12" viewBox="0 0 12 12"><path d="M3 1h8v8H9M1 3h8v8H1z" fill="#fff" stroke="#445" stroke-width="1.500"/><path d="M4 6h2v2H4z" fill="#fff" stroke="#445"/></svg></button>
        <button aria-label="Close view"><svg width="12" height="12" viewBox="0 0 12 12"><path d="M1 1h3l2 3 2-3h3L8 6l3 5H8L6 8l-2 3H1l3-5z" fill="#fff" stroke="#445"/></svg></button>
      </div>
      <svg class="cube" width="136" height="112" viewBox="130 240 408 336" font-family="Open Sans, sans-serif" font-weight="700">
        <defs><radialGradient id="sh"><stop offset="0" stop-color="#666" stop-opacity=".9"/><stop offset=".5" stop-color="#999" stop-opacity=".5"/><stop offset="1" stop-color="#fff" stop-opacity="0"/></radialGradient><linearGradient id="fc" x1="0" y1="0" x2="0" y2="1"><stop offset="0" stop-color="#fafafa"/><stop offset="1" stop-color="#e2e2e4"/></linearGradient></defs>
        <ellipse cx="333" cy="440" rx="172" ry="109" fill="none" stroke="#f1f1f2" stroke-width="42"/>
        <ellipse cx="333" cy="440" rx="194" ry="129" fill="none" stroke="#c4c4c4" stroke-width="3"/>
        <ellipse cx="333" cy="440" rx="149" ry="90" fill="#fff" stroke="#c4c4c4" stroke-width="3"/>
        <ellipse cx="333" cy="430" rx="150" ry="80" fill="url(#sh)"/>
        <g fill="#e2e2e2" stroke="#999" stroke-width="3" font-size="50"><text transform="matrix(.9 .4 -.6 .8 196 356)">W</text><text transform="matrix(.9 -.3 .5 .8 424 370)">N</text><text transform="matrix(1.200 -.5 .8 .8 168 532)">S</text><text transform="matrix(1.100 -.7 1 .5 440 528)">E</text></g>
        <path d="M333 249l105 50-6 118-101 63-95-63-7-118z" fill="url(#fc)"/>
        <path d="M333 249l105 50-105 60-104-60z" fill="#f1f1f3"/>
        <path d="M333 249l105 50-6 118-101 63-95-63-7-118zM229 299l104 60 105-60M333 359l-2 121" fill="none" stroke="#888" stroke-width="3"/>
        <path d="M313 348l20-11 20 11v20l-20 12-20-12z" fill="#e4e8ee"/>
        <g fill="#a4a6aa" font-size="32"><text transform="matrix(.8 .4 -.5 .7 303 297)">TOP</text><text transform="matrix(.67 .42 .02 1 245 380)">FRONT</text><text transform="matrix(.65 -.4 0 1 352 419)">RIGHT</text></g>
      </svg>
      <div class="navbar">
        <button class="r" aria-label="Close navigation"><svg width="9" height="9" viewBox="0 0 9 9"><circle cx="4.500" cy="4.500" r="4" fill="#999"/><path d="M3 3l3 3M6 3L3 6" stroke="#fff"/></svg></button>
        <button aria-label="Steering wheel"><svg width="26" height="26" viewBox="0 0 26 26"><path d="M11 1h8v10a9 9 0 1 1-8-10z" fill="#eceef2" stroke="#999"/><circle cx="10" cy="11" r="5" fill="#fff" stroke="#999"/><path d="M14 16l3-2h8v7l-3 3h-8z" fill="#b8d4f0" stroke="#6c9ccc"/><path d="M14 16h8v8M22 16l3-2" fill="none" stroke="#6c9ccc"/></svg></button>
        <i class="dd"></i><hr>
        <button aria-label="Zoom"><svg width="18" height="18" viewBox="0 0 18 18"><path d="M1 1h11v11H1z" fill="#b9d3a6" stroke="#86a870"/><circle cx="11" cy="11" r="3.500" fill="#fff" stroke="#999"/><path d="M13 13l4 4" stroke="#888" stroke-width="2"/></svg></button>
        <i class="dd"></i>
        <button class="r b" aria-label="Navigation options"><svg width="9" height="9" viewBox="0 0 9 9"><circle cx="4.500" cy="4.500" r="4" fill="#999"/><path d="M2 3.500h5M3 5.500h3" stroke="#fff"/></svg></button>
      </div>
    </div>
    <div class="vscroll"><svg width="9" height="6" viewBox="0 0 9 6"><path d="M1 5l3.500-3.500L8 5" class="ch"/></svg><i></i></div>
    <div class="viewbar">
      <span class="scale">1/8" = 1'-0"</span>
      <button aria-label="Detail level"><svg width="17" height="16" viewBox="0 0 17 16"><path d="M1 2.500h15v11H1z" fill="#ddd" stroke="#334"/><path d="M2 3h4v3H2zM11 3h4v3h-4zM6 6h5v4H6zM2 10h4v3H2zM11 10h4v3h-4z" fill="#556"/></svg></button>
      <button aria-label="Visual style"><svg width="16" height="16" viewBox="0 0 16 16"><path d="M1 7l4-4h10v6l-4 4H1zM1 7h10v6M11 7l4-4" fill="#fff" stroke="#334"/></svg></button>
      <button aria-label="Sun path"><svg width="17" height="16" viewBox="0 0 17 16"><path d="M6 0v13M0 6h13M2 2l9 9M11 2l-9 9" stroke="#e0a020"/><circle cx="6.500" cy="6.500" r="4" fill="#fff2c0" stroke="#d09010" stroke-width="1.500"/><path d="M9 8l6 6M15 8l-6 6" stroke="#c22" stroke-width="2"/></svg></button>
      <button aria-label="Shadows"><svg width="17" height="16" viewBox="0 0 17 16"><circle cx="7" cy="6" r="4.500" fill="#dcebf8" stroke="#4a88c0"/><path d="M1 13h8" stroke="#667" stroke-width="3"/><path d="M9 8l6 6M15 8l-6 6" stroke="#c22" stroke-width="2"/></svg></button>
      <button aria-label="Rendering"><svg width="16" height="16" viewBox="0 0 16 16"><path d="M1 3h4M3 8q0-5 5-5 3 0 4 3M3 8q0 4 5 4" class="lv"/><circle cx="12" cy="8" r="3" class="lv"/><path d="M12 11v4" class="lv"/></svg></button>
      <button aria-label="Crop view off"><svg width="17" height="16" viewBox="0 0 17 16"><path d="M4 13V4h10v5M0 11h4" fill="none" stroke="#1f5ea8" stroke-width="2"/><path d="M7 7h3M7 7v5M1 13h2" stroke="#334"/><path d="M8 6l7 8M15 6l-7 8" stroke="#c22" stroke-width="2"/></svg></button>
      <button aria-label="Hide crop region"><svg width="17" height="16" viewBox="0 0 17 16"><path d="M4 13V4h6M0 11h4" fill="none" stroke="#1f5ea8" stroke-width="2"/><path d="M7 7v5M1 13h2" stroke="#c22" stroke-width="2"/><circle cx="12.500" cy="6" r="3" fill="#cfe4f8" stroke="#2a6db5"/><path d="M12.500 9v5" stroke="#445" stroke-width="2"/></svg></button>
      <button aria-label="Lock 3D view"><svg width="16" height="16" viewBox="0 0 16 16"><path d="M1 6l5-5 8 2v5l-6 5-6-2z" fill="#eef" stroke="#334"/><path d="M1 6l5 2 8-5M6 8v5" fill="none" stroke="#334"/><path d="M9 10h6v5H9z" fill="#9fc4b2" stroke="#254"/><path d="M10 10V8h4v2" fill="none" stroke="#254"/></svg></button>
      <button aria-label="Temporary hide"><svg width="17" height="16" viewBox="0 0 17 16"><circle cx="6" cy="10" r="2.500" fill="#cde" stroke="#334"/><circle cx="13" cy="8" r="2.500" fill="#cde" stroke="#334"/><path d="M4 9L1 6l2-2 2 1M15 7l1-3-4-1M8 9q1-2 3-1" fill="none" stroke="#334"/></svg></button>
      <button aria-label="Reveal hidden"><svg width="16" height="16" viewBox="0 0 16 16"><circle cx="8" cy="6" r="2.500" class="lv"/><path d="M7 9h2v4H7z" class="lv"/></svg></button>
      <button aria-label="Worksharing display"><svg width="16" height="16" viewBox="0 0 16 16"><path d="M2 4h11M2 4v9h5M5 2v3M9 2v3M13 4v3" class="lv"/><path d="M9 8h6v6H9zM12 8v6" class="lv"/></svg></button>
      <button aria-label="Temporary properties"><svg width="17" height="16" viewBox="0 0 17 16"><path d="M1 7l4-4h6M1 7h9M2 7v6M5 7v6M8 7v6M1 13h9" class="lv"/><circle cx="13" cy="7" r="2.500" class="lv"/><path d="M13 10v4" class="lv"/></svg></button>
      <button aria-label="Analytical model"><svg width="16" height="16" viewBox="0 0 16 16"><path d="M4 6l2-4h8v7l-2 4M1 8h3M1 8v5h3M5 6h7v8H5z" fill="#ccc" stroke="#444"/></svg></button>
      <button aria-label="Reveal constraints"><svg width="18" height="16" viewBox="0 0 18 16"><path d="M1 1v4M16 1v4M1 3h15M4 2L2 3l2 1M2 7v8" class="lv"/><path d="M9 9h7v5H9zM10 9V7h4v2" class="lv"/></svg></button>
      <button aria-label="Scroll icons"><svg width="6" height="9" viewBox="0 0 6 9"><path d="M5 1L1.500 4.500 5 8" class="ch"/></svg></button>
      <div class="hscroll"><i></i></div>
    </div>
  </section>
</main>
<div class="optbar">Modify | Place Door</div>
<footer class="status">
  <span class="ready">Ready</span>
  <div class="stools">
    <button class="sb" aria-label="Worksets"><svg width="18" height="18" viewBox="0 0 18 18"><path d="M6 3h6v5H6zM1 9h5v8H1zM6 8h6v9H6zM12 9h5v8h-5z" fill="#a2a2a2"/><path d="M6 3l3-2 3 2M6 3v5l3 2 3-2V3M1 10l3-2 2 1M17 10l-3-2-2 1M6 9v8M12 9v8" fill="none" stroke="#f0f0f0"/></svg></button>
    <select class="c1" aria-label="Active workset" disabled><option></option></select>
    <button class="sb flt"><svg width="16" height="18" viewBox="0 0 16 18"><path d="M4 1h11v3l-4 3v3L8 7 4 5z" fill="#eee" stroke="#999"/><path d="M7 8l-3 4-3 5h7l2-6z" fill="#999"/></svg><span>:0</span></button>
    <button class="sb" aria-label="Design options"><svg width="16" height="16" viewBox="0 0 16 16"><rect width="16" height="16" rx="2" fill="#a2a2a2"/></svg></button>
    <button class="sb" aria-label="Add to set"><svg width="16" height="16" viewBox="0 0 16 16"><path d="M2 0h14v16H2z" fill="#a2a2a2"/><path d="M0 9h5V6l5 5-5 5v-3H0z" fill="#999" stroke="#eee"/></svg></button>
    <select class="c1" aria-label="Design option" disabled><option>Main Model</option></select>
  </div>
</footer>

<div class="dialog" role="dialog" aria-labelledby="dt">
  <h2 id="dt">Autodesk Revit 2017</h2>
  <div class="dbody">
    <fieldset><legend>Error - cannot be ignored</legend>
      <div class="msg"><textarea id="msg" aria-label="Error message" readonly>Can't cut instance of 36" x 80" out of Wall.</textarea><div class="mbar"><svg width="9" height="6" viewBox="0 0 9 6"><path d="M1 5l3.500-3.500L8 5" class="chd"/></svg><svg width="9" height="6" viewBox="0 0 9 6"><path d="M1 1l3.500 3.500L8 1" class="chd"/></svg></div></div>
      <div class="row"><button class="b1">Show</button><button class="b2">More Info</button><button class="b3">Expand &gt;&gt;</button></div>
    </fieldset>
    <div class="row foot"><button class="del">Delete Instance(s)</button><button class="b4" disabled>OK</button><button class="b4">Cancel</button></div>
  </div>
</div>
<script src="main.js"></script>
</body>
</html>
```
FILE: main.js
```js
const message = document.getElementById('msg');
message.focus();
message.select();
```
FILE: styles.css
```css
* { box-sizing: border-box; }
body { margin: 0; min-height: 100vh; display: flex; flex-direction: column; background: #f0f0f0; color: #000; font: 11px/16px "Open Sans", "Noto Sans", sans-serif; position: relative; overflow: hidden; }
button, input, select, textarea { font: inherit; color: inherit; margin: 0; }
button { background: none; border: 0; padding: 0; display: inline-flex; align-items: center; justify-content: center; }
svg { flex: none; display: block; }
h1, h2 { margin: 0; font: inherit; }
i.dd { flex: none; width: 0; border: 3px solid transparent; border-top: 4px solid #555; border-bottom: 0; }
i.dd.dk { border-width: 5px 4px 0; border-top-color: #222; }
.l { fill: none; stroke: #b0b0b0; }
.w { fill: #fdfdfd; stroke: #b8b8b8; }
.s { fill: #e4e4e4; stroke: #b0b0b0; }
.lv { fill: none; stroke: #aaa; }
.ch { fill: none; stroke: #505050; stroke-width: 2; }
.chd { fill: none; stroke: #b8b8b8; stroke-width: 2; }

/* title bar */
.head { display: grid; grid-template-columns: 41px 1fr; grid-template-rows: 24px 20px; background: #404040; }
.app { grid-row: 1 / 3; height: 41px; border: 1px solid #111; background: linear-gradient(#e4e4e4, #b4b4b4 45%, #8a8a8a); }
.titlebar { display: flex; background: #fff; min-width: 0; }
.qat, .info { display: flex; align-items: center; background: linear-gradient(#9a9a9a, #6c6c6c 60%, #5a5a5a); border-top: 1px solid #555; border-right: 1px solid #555; }
.qat { width: 450px; padding-left: 5px; }
.qat .q { width: 24px; height: 22px; }
.qat .dd { margin: 0 3px; }
.sep { width: 1px; height: 22px; margin: 0 3px; background: #555; border-right: 1px solid #909090; }
.qat .sep { margin: 0 2px; }
.title { flex: 1; display: flex; justify-content: center; align-items: center; gap: 16px; white-space: nowrap; min-width: 0; }
.info { width: 460px; border-left: 1px solid #555; }
.tog { width: 13px; }
.search { width: 180px; height: 22px; border: 1px solid #000; padding: 0 3px; background: #fff; font-style: italic; outline: 0; }
.search::placeholder { color: #555; opacity: 1; }
.info .q { width: 24px; height: 22px; }
.user { width: 78px; margin-left: 2px; font-size: 12px; color: #111; white-space: nowrap; }
.info .dd { margin-left: 6px; }
.info .xch { margin-left: 6px; }
.info .q + .dd { margin-left: 3px; }
.win { width: 163px; display: flex; padding-left: 24px; }
.win button { flex: 1; }
.tabs { display: flex; align-items: stretch; padding-left: 3px; color: #fff; }
.tabs a { color: inherit; text-decoration: none; padding: 0 11px; line-height: 21px; white-space: nowrap; }
.tabs a.on { background: linear-gradient(#c2ddb8, #e4f5dd); color: #222; border: 1px solid #59c21b; border-bottom: 0; padding: 0 8px; line-height: 19px; }
.mini { margin-left: 22px; }

/* ribbon */
.ribbon { display: flex; height: 95px; border-top: 1px solid #59c21b; border-left: 1px solid #59c21b; border-bottom: 2px solid #59c21b; background: linear-gradient(#d2e8c8, #8f8f8f); color: #444; }
.panel { display: flex; flex-direction: column; background: #fdfdfd; border-right: 2px solid #a6b5a0; }
.panel:last-child { border-right: 0; }
.tools { flex: 1; display: flex; color: #a8a8a8; }
.plabel { height: 17px; display: flex; align-items: center; justify-content: center; gap: 4px; background: #efeff0; border-top: 1px solid #ccc; color: #333; line-height: 16px; white-space: nowrap; }
.p-select { width: 57px; } .p-prop { width: 64px; } .p-clip { width: 80px; } .p-geo { width: 139px; } .p-mod { width: 238px; } .p-view { width: 64px; } .p-meas { width: 57px; } .p-create { width: 81px; }
.big { flex-direction: column; justify-content: flex-start; font-size: 12px; padding-top: 4px; gap: 4px; }
.one { justify-content: center; }
.two { flex-direction: column; align-items: center; padding-top: 3px; gap: 2px; }
.two button { width: 38px; height: 34px; }
.sel { background: #b5d5f5; border: 1px solid #2a6ab0; }
.pair { padding-left: 10px; gap: 10px; }
.pair .big { width: 36px; }
.col { display: flex; flex-direction: column; padding-top: 2px; }
.col button { height: 24px; width: 25px; }
.pair .col button { width: 20px; }
.col.txt { width: 73px; }
.col.txt button { width: auto; align-self: flex-start; gap: 5px; font-size: 12px; padding-left: 7px; }
.tools i.dd { border-top-color: #777; }
.geo { align-items: flex-start; }
.geo > i.dd { margin: 36px 0 0 3px; }
.mod { padding: 2px 0 0 3px; }
.grid4 { display: grid; grid-template-columns: repeat(4, 39px); grid-auto-rows: 36px; padding-right: 2px; }
.grid3 { display: grid; grid-template-columns: repeat(3, 25px); grid-auto-rows: 24px; }
.vw { display: grid; grid-template-columns: 35px 25px; grid-auto-rows: 24px; padding-top: 2px; }
.w28 { gap: 6px; justify-content: flex-start; padding-left: 6px; }
.ms { flex-direction: column; padding: 2px 0 0 5px; }
.ms button { height: 36px; gap: 7px; justify-content: flex-start; }
.cr { display: grid; grid-template-columns: 38px 38px; grid-auto-rows: 36px; padding: 2px 0 0 3px; }

/* work area */
.work { flex: 1; display: flex; min-height: 0; border-top: 1px solid #8a8a8a; }
.side { width: 293px; padding-right: 4px; display: flex; flex-direction: column; gap: 5px; }
.pal { display: flex; flex-direction: column; gap: 2px; }
.pal h2 { height: 18px; padding: 0 6px 0 4px; background: #bfcddb; display: flex; align-items: center; justify-content: space-between; }
.browser { flex: 1; }
.pbody, .tree { border: 1px solid #d8d8d8; border-top: 2px solid #777; border-left: 2px solid #777; margin: 0 1px 0 0; }
.pbody { height: 423px; display: flex; flex-direction: column; }
.type { height: 71px; border-bottom: 1px solid #ddd; background: linear-gradient(#fff, #f0f0f0); justify-content: flex-start; gap: 4px; padding: 0 3px; font-size: 12px; color: #a2a2a2; }
.type i.dd { margin-left: auto; border-width: 4px 4px 0; border-top-color: #888; }
.thumb { width: 66px; height: 66px; border: 1px solid #ddd; display: flex; align-items: center; justify-content: center; }
.inst { height: 25px; padding-top: 1px; display: flex; align-items: flex-start; }
select { appearance: none; border-radius: 0; opacity: 1; }
.inst select { width: 203px; height: 23px; border: 1px solid #bbb; background: #ccc url("data:image/svg+xml,%3Csvg xmlns='http://www.w3.org/2000/svg' width='9' height='6'%3E%3Cpath d='M0 1l4.500 4L9 1' fill='none' stroke='%23999'/%3E%3C/svg%3E") no-repeat right 5px center; color: #777; padding: 0 4px; font-size: 12px; }
.etype { gap: 5px; padding: 0 0 0 6px; font-size: 12px; color: #a0a0a0; white-space: nowrap; }
.scroller { display: flex; height: 298px; }
.tblwrap { width: 269px; overflow: hidden; }
table { border-collapse: collapse; table-layout: fixed; width: 268px; }
.k1 { width: 128px; } .k2 { width: 128px; } .k3 { width: 12px; }
td, th { height: 18px; line-height: 16px; padding: 0 0 0 2px; font-weight: 400; text-align: left; border-bottom: 1px dotted #666; border-right: 1px dotted #666; white-space: nowrap; color: #333; }
th:first-child { padding-left: 8px; }
.grp th:first-child { background: #dcdcdc; border: 0; padding-left: 2px; color: #000; }
.grp svg { float: right; margin: 3px 5px 0 0; }
.dim th, .dim td { color: #8a8a8a; }
.edit { width: 124px; height: 16px; background: #ccc; border: 1px solid #bbb; color: #888; vertical-align: top; }
td input { appearance: none; width: 13px; height: 13px; border: 1px solid #ccc; background: #fff; display: block; margin: 3px 0 0 1px; }
.vbar { width: 16px; display: flex; flex-direction: column; align-items: center; padding: 6px 0 4px; }
.thumbv { width: 15px; height: 129px; margin: 5px 0 auto; background: #cdcdcd; }
.pfoot { flex: 1; display: flex; justify-content: space-between; align-items: flex-start; padding: 1px 2px 0; line-height: 20px; }
.pfoot a { color: #0563d6; }
.pfoot button { width: 73px; height: 21px; background: #ccc; border: 1px solid #bbb; color: #888; font-size: 12px; }

/* project browser tree */
.tree { flex: 1; list-style: none; padding: 0; background: #fff; }
.tree li { display: flex; height: 18px; align-items: center; white-space: nowrap; }
.tree li > svg { margin-right: 6px; }
.g { flex: none; width: 20px; height: 18px; --dot: #999; }
.v { background: repeating-linear-gradient(var(--dot) 0 1px, transparent 1px 2px) 8px 0 / 1px 18px no-repeat; }
.t { background: repeating-linear-gradient(var(--dot) 0 1px, transparent 1px 2px) 8px 0 / 1px 18px no-repeat, repeating-linear-gradient(90deg, var(--dot) 0 1px, transparent 1px 2px) 8px 10px / 12px 1px no-repeat; }
.e { background: repeating-linear-gradient(var(--dot) 0 1px, transparent 1px 2px) 8px 0 / 1px 10px no-repeat, repeating-linear-gradient(90deg, var(--dot) 0 1px, transparent 1px 2px) 8px 10px / 12px 1px no-repeat; }
.m, .p { background: linear-gradient(#3b5ea8, #3b5ea8) 6px 10px / 5px 1px no-repeat, linear-gradient(#fff, #fff) 5px 7px / 7px 7px no-repeat, linear-gradient(#8a8a8a, #8a8a8a) 4px 6px / 9px 9px no-repeat, repeating-linear-gradient(90deg, var(--dot) 0 1px, transparent 1px 2px) 8px 10px / 12px 1px no-repeat, repeating-linear-gradient(var(--dot) 0 1px, transparent 1px 2px) 8px 0 / 1px 18px no-repeat; }
.first { background-size: 5px 1px, 7px 7px, 9px 9px, 12px 1px, 1px 8px; background-position: 6px 10px, 5px 7px, 4px 6px, 8px 10px, 8px 10px; }
.end { background-size: 5px 1px, 7px 7px, 9px 9px, 12px 1px, 1px 8px; }
.p { background: linear-gradient(#3b5ea8, #3b5ea8) 8px 8px / 1px 5px no-repeat, linear-gradient(#3b5ea8, #3b5ea8) 6px 10px / 5px 1px no-repeat, linear-gradient(#fff, #fff) 5px 7px / 7px 7px no-repeat, linear-gradient(#8a8a8a, #8a8a8a) 4px 6px / 9px 9px no-repeat, repeating-linear-gradient(90deg, var(--dot) 0 1px, transparent 1px 2px) 8px 10px / 12px 1px no-repeat, repeating-linear-gradient(var(--dot) 0 1px, transparent 1px 2px) 8px 0 / 1px 18px no-repeat; }
.s2, .s3 { display: flex; align-items: center; }
.s2::before, .s3::before { content: ""; width: 3px; margin-right: 3px; height: 1px; background: repeating-linear-gradient(90deg, #999 0 1px, transparent 1px 2px); }
.cur { font-weight: 700; background: linear-gradient(#e4e4e4, #e4e4e4) 3px 0 no-repeat; padding-right: 3px; height: 18px; }

/* viewport */
.viewport { flex: 1; min-width: 0; display: grid; grid-template-columns: 1fr 18px; grid-template-rows: 1fr 18px; border-left: 2px solid #777; border-top: 1px solid #666; background: #fff; }
.canvas { position: relative; overflow: hidden; min-height: 0; }
.model { position: absolute; left: 375px; top: 0; }
.snip { position: absolute; left: 920px; top: 43px; width: 173px; height: 21px; padding-left: 32px; line-height: 21px; background: #edf5fc; color: #c4ccd4; }
.mdi { position: absolute; right: 5px; top: 8px; display: flex; gap: 5px; }
.mdi button { width: 13px; height: 12px; }
.cube { position: absolute; right: 23px; top: 78px; }
.navbar { position: absolute; right: 1px; top: 200px; width: 36px; height: 118px; border: 2px solid #b8b8b8; border-radius: 5px; background: #f5f5f5; display: flex; flex-direction: column; align-items: center; gap: 6px; padding: 2px 0; }
.navbar hr { width: 26px; margin: 0; border: 0; border-top: 1px solid #bbb; }
.navbar .r { align-self: flex-end; margin-right: 2px; }
.navbar .b { margin-top: auto; }
.vscroll { background: #f0f0f0; display: flex; flex-direction: column; align-items: center; padding-top: 6px; }
.vscroll i { width: 16px; height: 17px; margin-top: 414px; background: #cdcdcd; }
.viewbar { grid-column: 1 / 3; display: flex; align-items: center; background: #f0f0f0; padding-left: 11px; }
.scale { width: 65px; white-space: nowrap; }
.viewbar button { width: 21px; height: 18px; }
.viewbar button:nth-last-child(2) { width: 18px; }
.hscroll { flex: 1; height: 16px; margin-left: 12px; }
.hscroll i { display: block; width: 17px; height: 16px; margin-left: 580px; background: #cdcdcd; }

/* bottom bars */
.optbar { height: 27px; padding: 0 9px; border-top: 1px solid #fff; background: #d8e3d1; color: #999; line-height: 24px; text-shadow: 1px 1px #fff; }
.status { height: 25px; border-top: 1px solid #888; border-bottom: 2px solid #222; background: linear-gradient(#e4e4e4, #c8c8c8); display: flex; align-items: stretch; }
.ready { width: 899px; padding-left: 2px; line-height: 23px; }
.stools { display: flex; gap: 2px; align-items: center; }
.sb { width: 24px; height: 21px; background: #dcdcdc; border: 1px solid #cfcfcf; }
.flt { width: 52px; gap: 4px; }
.c1 { width: 207px; height: 21px; border: 2px solid #cfd2d4; background: #fff url("data:image/svg+xml,%3Csvg xmlns='http://www.w3.org/2000/svg' width='9' height='6'%3E%3Cpath d='M0 1l4.500 4L9 1' fill='none' stroke='%23999'/%3E%3C/svg%3E") no-repeat right 2px center; padding: 0 1px; color: #777; font-size: 12px; line-height: 16px; }

/* error dialog */
.dialog { position: absolute; right: 4px; bottom: 4px; width: 454px; border: 1px solid #1a7fd4; background: #f0f0f0; box-shadow: 0 2px 14px rgba(0, 0, 0, .35); }
.dialog h2 { height: 30px; padding-left: 8px; line-height: 30px; background: #fff; }
.dbody { padding: 0 10px 11px 11px; }
fieldset { margin: 0; min-width: 0; padding: 2px 8px 9px; border: 1px solid #dcdcdc; }
legend { padding: 0 2px; margin-left: -2px; line-height: 14px; }
.msg { display: flex; height: 63px; border: 1px solid #0f72cf; background: #fff; }
textarea { flex: 1; border: 0; outline: 0; resize: none; padding: 1px 5px; overflow: hidden; background: #fff; line-height: 15px; }
textarea::selection { background: #3399ff; color: #fff; }
.mbar { width: 17px; margin: 1px; background: #f0f0f0; display: flex; flex-direction: column; justify-content: space-between; align-items: center; padding: 7px 0 5px; }
.row { display: flex; justify-content: flex-end; gap: 8px; margin-top: 7px; }
.row button { height: 22px; background: #e1e1e1; border: 1px solid #adadad; white-space: nowrap; }
.row button:disabled { background: #ccc; border-color: #bfbfbf; color: #888; }
fieldset .row { padding-right: 2px; }
.b1 { width: 79px; } .b2 { width: 73px; } .b3 { width: 91px; } .b4 { width: 88px; }
.foot { margin-top: 21px; }
.foot .del { width: 163px; margin-right: auto; }
.foot .b4:last-child { margin-right: 2px; }
```
